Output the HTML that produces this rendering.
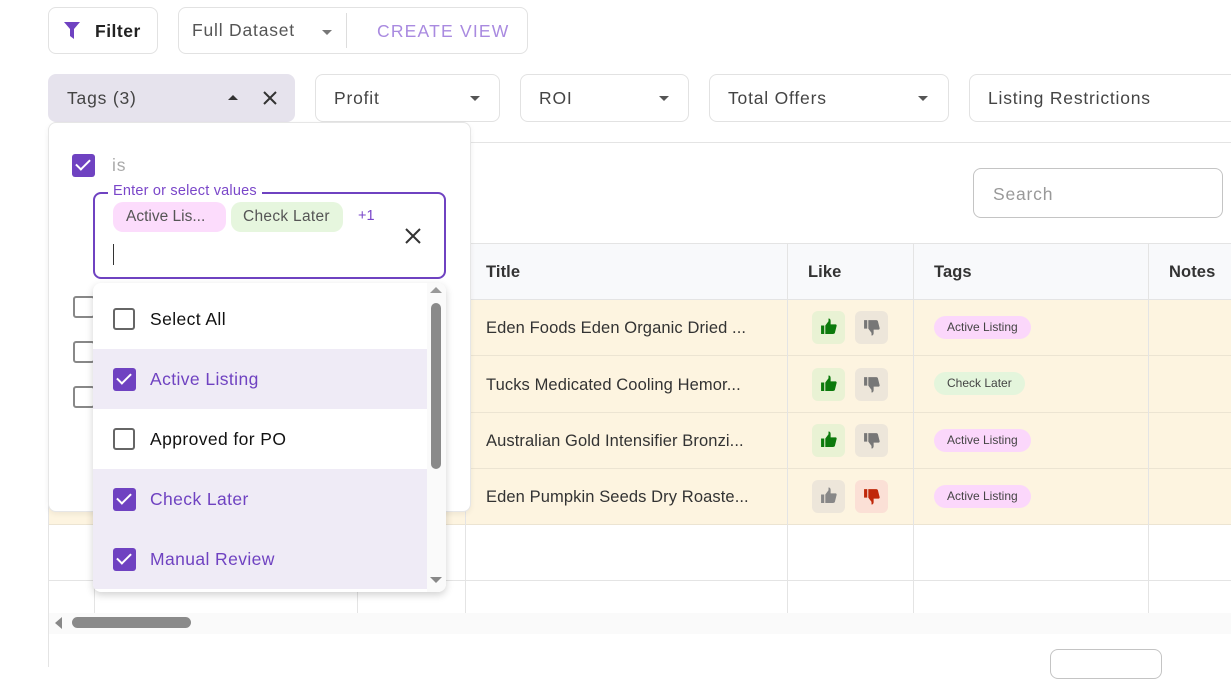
<!DOCTYPE html>
<html><head><meta charset="utf-8"><style>
*{box-sizing:border-box;margin:0;padding:0}
body{width:1231px;height:667px;overflow:hidden;background:#fff;font-family:"Liberation Sans",sans-serif;position:relative;color:#333}
.a{position:absolute}
.box{position:absolute;border:1px solid #e2e2e2;border-radius:8px;background:#fff}
.lbl{position:absolute;font-size:17.5px;color:#444;letter-spacing:.8px}
.caret{position:absolute;width:0;height:0;border-left:5px solid transparent;border-right:5px solid transparent;border-top:5px solid #555}
.vl{position:absolute;width:1px;background:#e4e4e4}
.hl{position:absolute;height:1px;background:#e4e4e4}
.cell{position:absolute;font-size:16.5px;color:#333;letter-spacing:.1px}
.chip{position:absolute;height:23px;border-radius:12px;font-size:12px;line-height:23px;padding:0 13px;color:#444}
.btn{position:absolute;width:33px;height:33px;border-radius:6px}
.cb{position:absolute;width:22px;height:22px;border:2px solid #666;border-radius:3px;background:#fff}
.cbc{position:absolute;width:23px;height:23px;border-radius:3px;background:#6f42c1}
.cbc:after{content:"";position:absolute;left:7px;top:2px;width:6px;height:12px;border:solid #fff;border-width:0 2.5px 2.5px 0;transform:rotate(45deg)}
.it{position:absolute;left:0;width:334px;height:60px;font-size:17.5px;letter-spacing:.4px}
</style></head><body>
<div class="box" style="left:48px;top:7px;width:110px;height:47px"></div>
<svg class="a" style="left:64px;top:22px" width="16" height="17" viewBox="0 0 16 17"><path d="M0 0H16L10 7V17L6 14V7Z" fill="#6f42c1"/></svg>
<div class="lbl" style="left:95px;top:21px;color:#222;font-weight:bold;letter-spacing:.5px">Filter</div>
<div class="box" style="left:178px;top:7px;width:350px;height:47px"></div>
<div class="lbl" style="left:192px;top:20px;color:#555">Full Dataset</div>
<div class="caret" style="left:322px;top:30px;border-top-color:#777"></div>
<div class="vl" style="left:346px;top:13px;height:35px;background:#ddd"></div>
<div class="lbl" style="left:377px;top:21px;color:#a98ae0;letter-spacing:1.2px">CREATE VIEW</div>

<div class="a" style="left:48px;top:74px;width:247px;height:48px;background:#e6e3ed;border-radius:8px"></div>
<div class="lbl" style="left:67px;top:88px">Tags (3)</div>
<div class="a" style="left:228px;top:95px;width:0;height:0;border-left:5px solid transparent;border-right:5px solid transparent;border-bottom:5px solid #333"></div>
<svg class="a" style="left:263px;top:91px" width="14" height="14"><path d="M1 1L13 13M13 1L1 13" stroke="#333" stroke-width="2"/></svg>
<div class="box" style="left:315px;top:74px;width:185px;height:48px"></div>
<div class="lbl" style="left:334px;top:88px">Profit</div><div class="caret" style="left:470px;top:96px"></div>
<div class="box" style="left:520px;top:74px;width:169px;height:48px"></div>
<div class="lbl" style="left:539px;top:88px">ROI</div><div class="caret" style="left:659px;top:96px"></div>
<div class="box" style="left:709px;top:74px;width:240px;height:48px"></div>
<div class="lbl" style="left:728px;top:88px">Total Offers</div><div class="caret" style="left:918px;top:96px"></div>
<div class="box" style="left:969px;top:74px;width:280px;height:48px"></div>
<div class="lbl" style="left:988px;top:88px">Listing Restrictions</div>

<div class="hl" style="left:48px;top:142px;width:1183px"></div>
<div class="box" style="left:973px;top:168px;width:250px;height:50px;border-color:#c4c4c4"></div>
<div class="lbl" style="left:993px;top:184px;color:#999">Search</div>

<div class="a" style="left:48px;top:243px;width:1183px;height:57px;background:#f8f9fb;border-top:1px solid #e4e4e4;border-bottom:1px solid #e4e4e4"></div>
<div class="a" style="left:48px;top:300px;width:1183px;height:224px;background:#fdf4e0"></div>
<div class="hl" style="left:48px;top:355px;width:1183px;background:#ece4d2"></div>
<div class="hl" style="left:48px;top:412px;width:1183px;background:#ece4d2"></div>
<div class="hl" style="left:48px;top:468px;width:1183px;background:#ece4d2"></div>
<div class="hl" style="left:48px;top:524px;width:1183px;background:#ece4d2"></div>
<div class="hl" style="left:48px;top:580px;width:1183px"></div>
<div class="vl" style="left:48px;top:243px;height:424px"></div>
<div class="vl" style="left:94px;top:243px;height:370px"></div>
<div class="vl" style="left:357px;top:243px;height:370px"></div>
<div class="vl" style="left:465px;top:243px;height:370px"></div>
<div class="vl" style="left:787px;top:243px;height:370px"></div>
<div class="vl" style="left:913px;top:243px;height:370px"></div>
<div class="vl" style="left:1148px;top:243px;height:370px"></div>
<div class="cell" style="left:486px;top:263px;font-weight:bold">Title</div>
<div class="cell" style="left:808px;top:263px;font-weight:bold">Like</div>
<div class="cell" style="left:934px;top:263px;font-weight:bold">Tags</div>
<div class="cell" style="left:1169px;top:263px;font-weight:bold">Notes</div>

<div class="cell" style="left:486px;top:319px">Eden Foods Eden Organic Dried ...</div>
<div class="cell" style="left:486px;top:376px">Tucks Medicated Cooling Hemor...</div>
<div class="cell" style="left:486px;top:432px">Australian Gold Intensifier Bronzi...</div>
<div class="cell" style="left:486px;top:488px">Eden Pumpkin Seeds Dry Roaste...</div>

<svg width="0" height="0" style="position:absolute"><defs>
<symbol id="up" viewBox="0 0 16 16"><path d="M1 7H4V15H1ZM5 7L8 3V0.5C9.5 0.5 10 1.5 10 3V6H14.5C15.5 6 16 7 15.5 8L14 14C13.7 14.8 13 15 12 15H5Z"/></symbol>
<symbol id="dn" viewBox="0 0 16 16"><path d="M1 1H4V9H1ZM5 9L8 13V15.5C9.5 15.5 10 14.5 10 13V10H14.5C15.5 10 16 9 15.5 8L14 2C13.7 1.2 13 1 12 1H5Z"/></symbol>
</defs></svg>
<div class="btn" style="left:812px;top:311px;background:#e9f2d4"></div><svg class="a" style="left:820px;top:318px;fill:#0c7a0c" width="17" height="17"><use href="#up"/></svg>
<div class="btn" style="left:855px;top:311px;background:#ede6da"></div><svg class="a" style="left:863px;top:319px;fill:#777" width="17" height="17"><use href="#dn"/></svg>
<div class="btn" style="left:812px;top:368px;background:#e9f2d4"></div><svg class="a" style="left:820px;top:375px;fill:#0c7a0c" width="17" height="17"><use href="#up"/></svg>
<div class="btn" style="left:855px;top:368px;background:#ede6da"></div><svg class="a" style="left:863px;top:376px;fill:#777" width="17" height="17"><use href="#dn"/></svg>
<div class="btn" style="left:812px;top:424px;background:#e9f2d4"></div><svg class="a" style="left:820px;top:431px;fill:#0c7a0c" width="17" height="17"><use href="#up"/></svg>
<div class="btn" style="left:855px;top:424px;background:#ede6da"></div><svg class="a" style="left:863px;top:432px;fill:#777" width="17" height="17"><use href="#dn"/></svg>
<div class="btn" style="left:812px;top:480px;background:#ede6da"></div><svg class="a" style="left:820px;top:487px;fill:#888" width="17" height="17"><use href="#up"/></svg>
<div class="btn" style="left:855px;top:480px;background:#fbe0d6"></div><svg class="a" style="left:863px;top:488px;fill:#c0280a" width="17" height="17"><use href="#dn"/></svg>

<div class="chip" style="left:934px;top:316px;background:#fbd7fb">Active Listing</div>
<div class="chip" style="left:934px;top:372px;background:#e4f5dc">Check Later</div>
<div class="chip" style="left:934px;top:429px;background:#fbd7fb">Active Listing</div>
<div class="chip" style="left:934px;top:485px;background:#fbd7fb">Active Listing</div>

<div class="a" style="left:49px;top:613px;width:1182px;height:21px;background:#fafafa"></div>
<div class="a" style="left:55px;top:617px;width:0;height:0;border-top:6px solid transparent;border-bottom:6px solid transparent;border-right:7px solid #888"></div>
<div class="a" style="left:72px;top:617px;width:119px;height:11px;border-radius:6px;background:#8a8a8a"></div>
<div class="a" style="left:1050px;top:649px;width:112px;height:30px;border:1px solid #c4c4c4;border-radius:8px"></div>

<div class="a" style="left:48px;top:122px;width:423px;height:390px;background:#fff;border:1px solid #e6e6e6;border-radius:8px;box-shadow:0 2px 6px rgba(0,0,0,.06)"></div>
<div class="cbc" style="left:72px;top:154px"></div>
<div class="lbl" style="left:112px;top:155px;color:#aaa">is</div>
<div class="a" style="left:93px;top:192px;width:353px;height:87px;border:2px solid #6f42c1;border-radius:8px"></div>
<div class="a" style="left:108px;top:183px;background:#fff;padding:0 5px;font-size:14.5px;color:#7a46c9;letter-spacing:.2px">Enter or select values</div>
<div class="a" style="left:113px;top:202px;width:113px;height:30px;border-radius:10px;background:#fcdcfc;font-size:15.5px;line-height:30px;padding-left:13px;color:#555">Active Lis...</div>
<div class="a" style="left:231px;top:202px;width:112px;height:30px;border-radius:10px;background:#e6f6de;font-size:15.5px;line-height:30px;padding-left:12px;color:#555;letter-spacing:.3px">Check Later</div>
<div class="a" style="left:358px;top:208px;font-size:14.5px;color:#7a46c9">+1</div>
<svg class="a" style="left:405px;top:228px" width="16" height="16"><path d="M1 1L15 15M15 1L1 15" stroke="#333" stroke-width="2"/></svg>
<div class="a" style="left:113px;top:244px;width:1px;height:21px;background:#333"></div>
<div class="cb" style="left:73px;top:296px;border-color:#888"></div>
<div class="cb" style="left:73px;top:341px;border-color:#888"></div>
<div class="cb" style="left:73px;top:386px;border-color:#888"></div>

<div class="a" style="left:93px;top:283px;width:353px;height:309px;background:#fff;border-radius:8px;box-shadow:0 3px 8px rgba(0,0,0,.18);overflow:hidden">
 <div class="it" style="top:6px"><div class="cb" style="left:20px;top:19px"></div><div class="a" style="left:57px;top:20px;color:#111">Select All</div></div>
 <div class="it" style="top:66px;background:#efebf6"><div class="cbc" style="left:20px;top:19px"></div><div class="a" style="left:57px;top:20px;color:#6f42c1">Active Listing</div></div>
 <div class="it" style="top:126px"><div class="cb" style="left:20px;top:19px"></div><div class="a" style="left:57px;top:20px;color:#111">Approved for PO</div></div>
 <div class="it" style="top:186px;background:#efebf6"><div class="cbc" style="left:20px;top:19px"></div><div class="a" style="left:57px;top:20px;color:#6f42c1">Check Later</div></div>
 <div class="it" style="top:246px;background:#efebf6;height:60px"><div class="cbc" style="left:20px;top:19px"></div><div class="a" style="left:57px;top:20px;color:#6f42c1">Manual Review</div></div>
 <div class="a" style="left:334px;top:0;width:19px;height:309px;background:#fafafa"></div>
 <div class="a" style="left:337px;top:4px;border-left:6px solid transparent;border-right:6px solid transparent;border-bottom:6px solid #999"></div>
 <div class="a" style="left:338px;top:20px;width:10px;height:166px;border-radius:5px;background:#8a8a8a"></div>
 <div class="a" style="left:337px;top:294px;border-left:6px solid transparent;border-right:6px solid transparent;border-top:6px solid #888"></div>
</div>
</body></html>
